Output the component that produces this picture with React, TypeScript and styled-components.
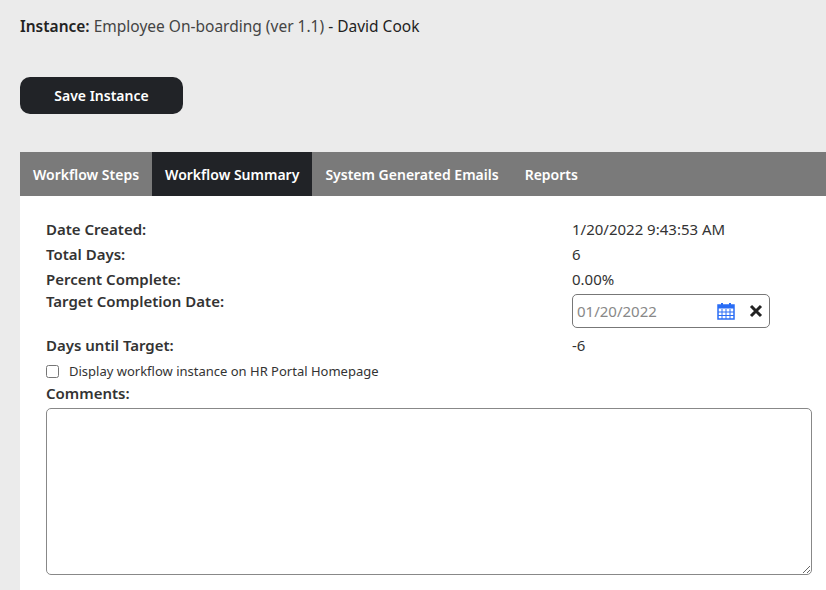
import { createGlobalStyle, styled } from 'styled-components';

const GlobalStyle = createGlobalStyle`
    body {
        margin: 0;
        background: #ebebeb;
        font-family: 'Noto Sans', 'Open Sans', sans-serif;
        color: #222;
    }
`;

const Page = styled.div`
    padding: 12px 0 0 20px;
    width: 806px;
    height: 578px;
    overflow: hidden;
`;

const Title = styled.div`
    font-size: 15.5px;
    color: #444;
    height: 28px;
    line-height: 28px;
    b {
        color: #222;
        font-weight: 600;
    }
    span {
        color: #222;
    }
`;

const SaveButton = styled.button`
    margin-top: 37px;
    width: 163px;
    height: 37px;
    border: none;
    border-radius: 10px;
    background: #212327;
    color: #fff;
    font-family: inherit;
    font-size: 14px;
    font-weight: 600;
`;

const TabBar = styled.div`
    margin-top: 38px;
    display: flex;
    height: 44px;
    background: #7a7a7a;
`;

const Tab = styled.div<{ $active?: boolean }>`
    display: flex;
    align-items: center;
    padding: 0 13px;
    font-size: 14px;
    font-weight: 600;
    color: #fff;
    background: ${(p) => (p.$active ? '#212327' : 'transparent')};
`;

const Panel = styled.div`
    background: #fff;
    padding: 20px 0 20px 26px;
    height: 400px;
`;

const Row = styled.div<{ $tall?: boolean }>`
    display: grid;
    grid-template-columns: 526px 1fr;
    align-items: ${(p) => (p.$tall ? 'start' : 'center')};
    min-height: 25px;
    font-size: 15px;
`;

const Label = styled.div`
    font-weight: 600;
    color: #333;
`;

const Value = styled.div`
    color: #333;
`;

const DateBox = styled.div`
    display: flex;
    align-items: center;
    width: 186px;
    height: 32px;
    margin-top: 3px;
    border: 1px solid #777;
    border-radius: 5px;
    padding: 0 6px 0 4px;
    color: #888;
    gap: 0;
    span {
        flex: 1;
    }
`;

const CheckRow = styled.label`
    display: flex;
    align-items: center;
    gap: 10px;
    margin-top: 5px;
    font-size: 13px;
    color: #333;
    input {
        margin: 0;
        width: 13px;
        height: 13px;
    }
`;

const Comments = styled.textarea`
    display: block;
    width: 766px;
    height: 167px;
    margin-top: 3px;
    border: 1px solid #888;
    border-radius: 5px;
    box-sizing: border-box;
    resize: vertical;
`;

const Calendar = () => (
    <svg width="18" height="18" viewBox="0 0 18 18">
        <rect x="1" y="3" width="16" height="14" fill="#fff" stroke="#2a6df5" strokeWidth="1.5" />
        <rect x="1" y="3" width="16" height="3.5" fill="#2a6df5" />
        <rect x="4" y="1" width="2" height="4" fill="#2a6df5" />
        <rect x="12" y="1" width="2" height="4" fill="#2a6df5" />
        <path d="M5 7v10M9 7v10M13 7v10M1 10h16M1 13.5h16" stroke="#2a6df5" strokeWidth="1" />
    </svg>
);

const Cross = () => (
    <svg width="14" height="14" viewBox="0 0 14 14" style={{ marginLeft: 14 }}>
        <path d="M2 2l10 10M12 2L2 12" stroke="#222" strokeWidth="3" />
    </svg>
);

const App = () => (
    <Page>
        <GlobalStyle />
        <Title>
            <b>Instance:</b> Employee On-boarding (ver 1.1) <span>- David Cook</span>
        </Title>
        <SaveButton>Save Instance</SaveButton>
        <TabBar>
            <Tab>Workflow Steps</Tab>
            <Tab $active>Workflow Summary</Tab>
            <Tab>System Generated Emails</Tab>
            <Tab>Reports</Tab>
        </TabBar>
        <Panel>
            <Row>
                <Label>Date Created:</Label>
                <Value>1/20/2022 9:43:53 AM</Value>
            </Row>
            <Row>
                <Label>Total Days:</Label>
                <Value>6</Value>
            </Row>
            <Row>
                <Label>Percent Complete:</Label>
                <Value>0.00%</Value>
            </Row>
            <Row $tall>
                <Label>Target Completion Date:</Label>
                <DateBox>
                    <span>01/20/2022</span>
                    <Calendar />
                    <Cross />
                </DateBox>
            </Row>
            <Row style={{ marginTop: 4 }}>
                <Label>Days until Target:</Label>
                <Value>-6</Value>
            </Row>
            <CheckRow>
                <input type="checkbox" />
                Display workflow instance on HR Portal Homepage
            </CheckRow>
            <Row>
                <Label>Comments:</Label>
            </Row>
            <Comments />
        </Panel>
    </Page>
);

export default App;
